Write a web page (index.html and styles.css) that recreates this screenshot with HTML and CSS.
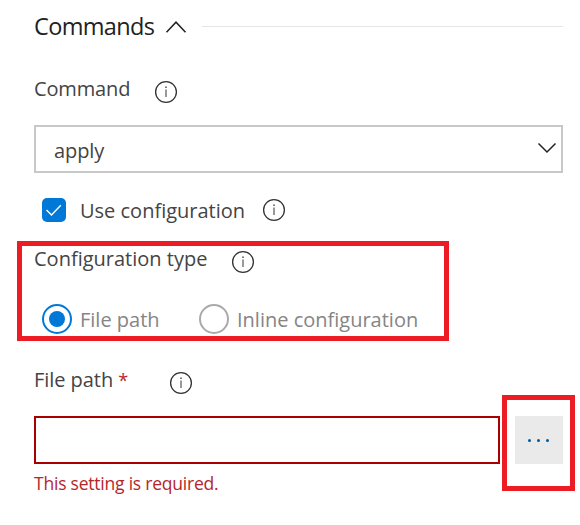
FILE: index.html
```html
<!DOCTYPE html>
<html lang="en">
<head>
<meta charset="utf-8">
<title>Commands</title>
<link rel="stylesheet" href="styles.css">
</head>
<body>
<svg class="defs" width="0" height="0" aria-hidden="true">
  <symbol id="info" viewBox="0 0 24 24">
    <circle cx="12" cy="12" r="10.4" fill="none" stroke="#333" stroke-width="1.3"/>
    <path d="M12 9.500v7.500" stroke="#555" stroke-width="1.2"/>
    <circle cx="12" cy="7.200" r=".85" fill="#555"/>
  </symbol>
</svg>
<main class="panel">
  <header class="section-head">
    <h1 class="title">Commands</h1>
    <svg class="collapse" viewBox="0 0 22 14"><path d="M1.500 12.200 11 2.200l9.500 10" fill="none" stroke="#222" stroke-width="1.500"/></svg>
    <span class="rule"></span>
  </header>
  <div class="label-row command-row">
    <span class="text command-text">Command</span>
    <svg class="info"><use href="#info"/></svg>
  </div>
  <div class="select">
    <span class="text value">apply</span>
    <svg class="chevron" viewBox="0 0 20 12"><path d="M1.500 1.500 10 10l8.500-8.500" fill="none" stroke="#222" stroke-width="1.500"/></svg>
  </div>
  <div class="check-row">
    <span class="checkbox"><svg viewBox="0 0 24 24"><path d="m4.500 12 5 5L18.800 7.300" fill="none" stroke="#fff" stroke-width="1.500"/></svg></span>
    <span class="text use-text">Use configuration</span>
    <svg class="info"><use href="#info"/></svg>
  </div>
  <div class="label-row type-row">
    <span class="text type-text">Configuration type</span>
    <svg class="info"><use href="#info"/></svg>
  </div>
  <div class="radio-row">
    <span class="radio checked"></span>
    <span class="text option file-option">File path</span>
    <span class="radio"></span>
    <span class="text option inline-option">Inline configuration</span>
  </div>
  <div class="label-row path-row">
    <span class="text path-text">File path <span class="required">*</span></span>
    <svg class="info"><use href="#info"/></svg>
  </div>
  <div class="input-row">
    <input class="path-input" type="text" aria-label="File path">
    <button class="browse" aria-label="Browse"><i></i><i></i><i></i></button>
  </div>
  <p class="error">This setting is required.</p>
  <div class="highlight highlight-type"></div>
  <div class="highlight highlight-browse"></div>
</main>
</body>
</html>
```
FILE: styles.css
```css
* { box-sizing: border-box; }
body { margin: 0; background: #fff; font-family: "Open Sans", "Noto Sans", sans-serif; }
.defs { display: block; }
.panel { position: relative; width: 580px; height: 525px; padding: 0 17px 0 34px; overflow: hidden; }
.section-head { display: flex; align-items: center; height: 54px; }
.title { margin: -2px 0 0; width: 131px; font-size: 23.500px; line-height: 32px; font-weight: 400; letter-spacing: -0.65px; color: #222; }
.collapse { width: 22px; height: 14px; }
.rule { width: 361px; height: 1px; margin: -1px 0 0 15px; background: #e6e6e6; }
.text { flex: none; font-size: 20px; line-height: 28px; color: #444; white-space: nowrap; }
.info { flex: none; width: 24px; height: 24px; }
.label-row { display: flex; align-items: flex-start; }
.label-row .info { margin-top: 5px; }
.command-row { height: 71px; padding-top: 21px; }
.command-text { width: 120px; letter-spacing: -0.15px; }
.select { display: flex; align-items: center; justify-content: space-between; height: 48px; padding: 4px 4px 0 18px; border: 2px solid #c8c8c8; }
.value { letter-spacing: -0.1px; }
.chevron { width: 20px; height: 12px; margin-top: -6px; }
.check-row { display: flex; align-items: center; height: 72px; padding: 2px 0 0 8px; }
.checkbox { width: 24px; height: 24px; border-radius: 5px; background: #0078d7; }
.checkbox svg { display: block; }
.use-text { width: 182px; margin: 2px 0 0 14px; }
.type-row { height: 37px; }
.type-text { width: 197px; }
.radio-row { display: flex; align-items: center; height: 74px; padding-left: 8px; }
.radio { display: grid; place-items: center; flex: none; width: 30px; height: 30px; border: 2px solid #aaa; border-radius: 50%; }
.radio.checked { border-color: #0078d7; }
.radio.checked::after { content: ""; width: 16px; height: 16px; border-radius: 50%; background: #0078d7; }
.option { margin: 2px 0 0 8px; color: #858585; }
.file-option { width: 119px; }
.path-row { height: 60px; padding-top: 10px; }
.path-text { width: 135px; letter-spacing: -0.05px; }
.required { font-size: 18px; color: #b4262c; }
.input-row { display: flex; gap: 15px; height: 48px; }
.path-input { width: 466px; height: 48px; border: 2px solid #a80000; border-radius: 0; background: #fff; }
.browse { display: flex; align-items: center; justify-content: center; gap: 6px; width: 48px; height: 48px; padding: 0 1px 0 0; border: 0; background: #eaeaea; }
.browse i { width: 3px; height: 3px; border-radius: 50%; background: #005a9e; }
.error { margin: 7px 0 0; font-size: 17.500px; line-height: 25px; letter-spacing: -0.22px; color: #b4262c; white-space: nowrap; }
.highlight { position: absolute; border: 5px solid #ed1c24; pointer-events: none; }
.highlight-type { left: 17px; top: 241px; width: 432px; height: 100px; }
.highlight-browse { left: 502px; top: 395px; width: 73px; height: 96px; }
```
